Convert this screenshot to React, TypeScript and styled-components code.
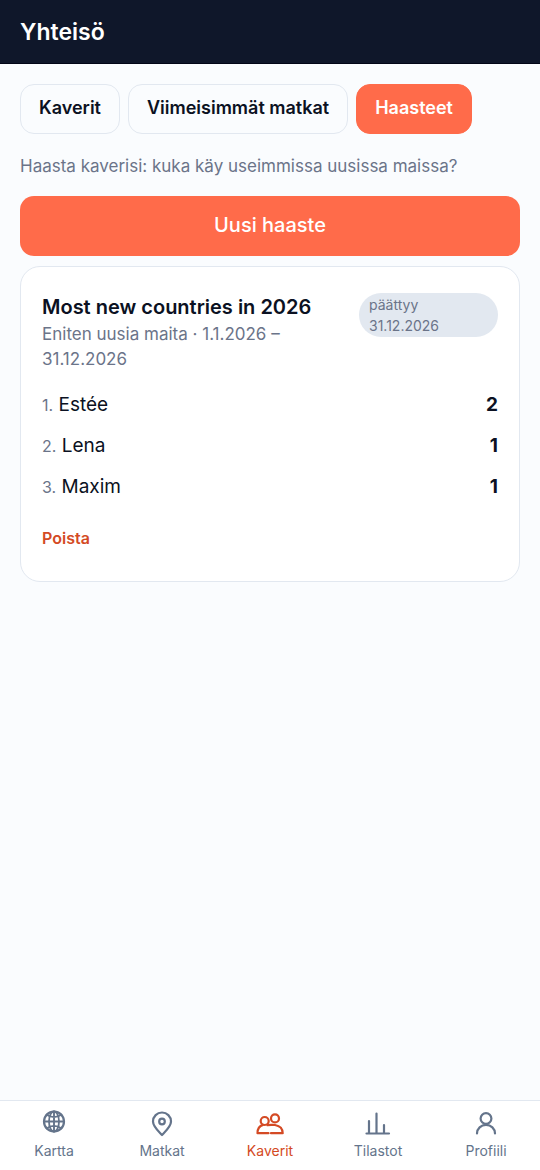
import React from "react";
import styled, { createGlobalStyle } from "styled-components";

const GlobalStyle = createGlobalStyle`
  *, *::before, *::after { box-sizing: border-box; }
  body {
    margin: 0;
    background: #fafcfe;
    color: #0b1122;
    font-family: Inter, "Liberation Sans", sans-serif;
    font-size: 17px;
    line-height: 25px;
  }
  button { font: inherit; cursor: pointer; }
  h1, h2, p, ol { margin: 0; padding: 0; }
`;

const Page = styled.div`
  min-height: 100vh;
  display: flex;
  flex-direction: column;
`;

const Header = styled.header`
  background: #0f172a;
  border-bottom: 1px solid #020617;
  padding: 17px 20px 15px;
`;

const Title = styled.h1`
  color: #fff;
  font-size: 23px;
  font-weight: 600;
  line-height: 31px;
`;

const Main = styled.main`
  flex: 1;
  display: flex;
  flex-direction: column;
  padding: 20px;
`;

const Tabs = styled.div`
  display: flex;
  gap: 8px;
  margin-bottom: 20px;
`;

const Tab = styled.button<{ $active?: boolean }>`
  height: 50px;
  padding: 0 18px 3px;
  border: 1px solid ${(p) => (p.$active ? "#ff6b4a" : "#e2e8f0")};
  border-radius: 14px;
  background: ${(p) => (p.$active ? "#ff6b4a" : "transparent")};
  color: ${(p) => (p.$active ? "#fff" : "#0b1122")};
  font-size: 18px;
  font-weight: 600;
  white-space: nowrap;
`;

const Hint = styled.p`
  color: #6b7489;
  margin-bottom: 17px;
`;

const Primary = styled.button`
  height: 60px;
  padding: 0 20px 2px;
  border: 0;
  border-radius: 14px;
  background: #ff6b4a;
  color: #fff;
  font-size: 20px;
  font-weight: 500;
`;

const Card = styled.section`
  margin-top: 10px;
  padding: 26px 21px 30px;
  background: #fff;
  border: 1px solid #e2e8f0;
  border-radius: 20px;
`;

const CardHead = styled.div`
  display: flex;
  align-items: flex-start;
  justify-content: space-between;
  gap: 12px;
`;

const CardTitle = styled.h2`
  font-size: 20px;
  font-weight: 600;
  line-height: 29px;
`;

const Muted = styled.p`
  color: #6b7489;
`;

const Badge = styled.span`
  flex: 0 0 139px;
  padding: 1px 10px;
  border-radius: 22px;
  background: #e2e8f0;
  color: #6b7489;
  font-size: 14px;
  line-height: 21px;
`;

const Ranking = styled.ol`
  list-style: none;
  margin-top: 12px;
`;

const Entry = styled.li`
  display: flex;
  justify-content: space-between;
  padding: 6px 0;
  font-size: 19px;
  line-height: 29px;
`;

const Rank = styled.span`
  color: #6b7489;
  font-size: 16px;
  line-height: 16px;
`;

const Remove = styled.button`
  margin-top: 19px;
  padding: 0;
  border: 0;
  background: none;
  color: #d44a24;
  font-size: 16px;
  font-weight: 600;
`;

const Nav = styled.nav`
  position: sticky;
  bottom: 0;
  display: flex;
  background: #fff;
  border-top: 1px solid #e2e8f0;
`;

const NavItem = styled.a<{ $active?: boolean }>`
  flex: 1 1 0;
  display: flex;
  flex-direction: column;
  align-items: center;
  gap: 2px;
  padding: 8px 0 9px;
  color: ${(p) => (p.$active ? "#d44a24" : "#64748b")};
  font-size: 14px;
  line-height: 20px;
  text-decoration: none;
`;

const Icon = styled.svg`
  width: 30px;
  height: 30px;
  fill: none;
  stroke: currentColor;
  stroke-width: 2.2;
  stroke-linecap: round;
  stroke-linejoin: round;
`;

const navItems = [
  {
    label: "Kartta",
    icon: (
      <>
        <circle cx="15" cy="12.5" r="10" />
        <ellipse cx="15" cy="12.5" rx="5" ry="10" strokeWidth="1.8" />
        <path
          d="M15 2.5v20M5 12.5h20M7.500 5.600c4.300 3.400 10.700 3.400 15 0M7.500 19.400c4.300-3.400 10.700-3.400 15 0"
          strokeWidth="1.9"
        />
      </>
    ),
  },
  {
    label: "Matkat",
    icon: (
      <>
        <path d="M15 26c-4-4.300-9-8.500-9-13.500a9 9 0 0 1 18 0c0 5-5 9.200-9 13.500z" />
        <circle cx="15" cy="12.500" r="2.800" />
      </>
    ),
  },
  {
    label: "Kaverit",
    active: true,
    icon: (
      <>
        <circle cx="9.700" cy="12" r="4" />
        <circle cx="20" cy="9.400" r="4" />
        <path d="M13.500 24.200H2.500c0-4.500 1.500-7.200 5.500-8.300" />
        <path d="M16 24.200h11.700c0-4.600-3-7.400-7.700-8.200-3 0-5.500-.200-7.500.200" />
      </>
    ),
  },
  {
    label: "Tilastot",
    icon: <path d="M3.500 24.500h22.500M6 24V12M13.500 24V4.500M21 24v-8" />,
  },
  {
    label: "Profiili",
    icon: (
      <>
        <circle cx="15" cy="9.500" r="5.400" />
        <path d="M6 24.500c0-5 4-8.600 9-8.600s9 3.600 9 8.600" />
      </>
    ),
  },
];

const entries = [
  { name: "Estée", score: 2 },
  { name: "Lena", score: 1 },
  { name: "Maxim", score: 1 },
];

export default function App() {
  return (
    <Page>
      <GlobalStyle />
      <Header>
        <Title>Yhteisö</Title>
      </Header>
      <Main>
        <Tabs>
          <Tab>Kaverit</Tab>
          <Tab>Viimeisimmät matkat</Tab>
          <Tab $active>Haasteet</Tab>
        </Tabs>
        <Hint>Haasta kaverisi: kuka käy useimmissa uusissa maissa?</Hint>
        <Primary>Uusi haaste</Primary>
        <Card>
          <CardHead>
            <div>
              <CardTitle>Most new countries in 2026</CardTitle>
              <Muted>Eniten uusia maita · 1.1.2026 – 31.12.2026</Muted>
            </div>
            <Badge>päättyy 31.12.2026</Badge>
          </CardHead>
          <Ranking>
            {entries.map((e, i) => (
              <Entry key={e.name}>
                <span>
                  <Rank>{i + 1}.</Rank> {e.name}
                </span>
                <strong>{e.score}</strong>
              </Entry>
            ))}
          </Ranking>
          <Remove>Poista</Remove>
        </Card>
      </Main>
      <Nav>
        {navItems.map((item) => (
          <NavItem
            key={item.label}
            href="#"
            $active={item.active}
            aria-current={item.active ? "page" : undefined}
          >
            <Icon viewBox="0 0 30 30" aria-hidden="true">
              {item.icon}
            </Icon>
            {item.label}
          </NavItem>
        ))}
      </Nav>
    </Page>
  );
}
